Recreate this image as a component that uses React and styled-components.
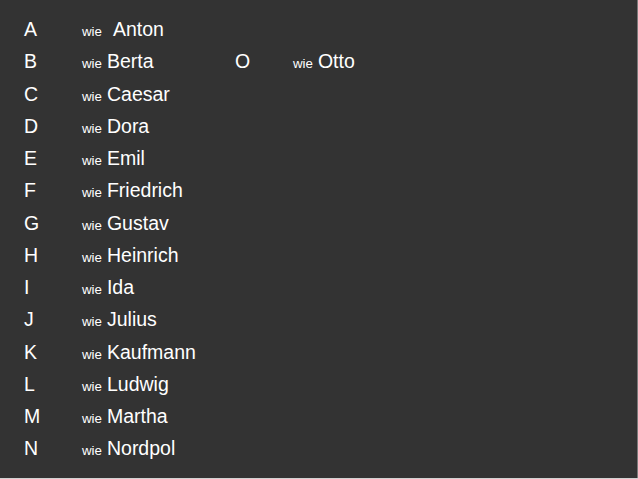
import React from "react";
import styled, { createGlobalStyle } from "styled-components";

const GlobalStyle = createGlobalStyle`
  html, body {
    margin: 0;
    padding: 0;
    background: #d2d2d2;
  }
`;

const Slide = styled.div`
  box-sizing: border-box;
  width: 638px;
  height: 478px;
  background: #333333;
  border-right: 1px solid #7a7a7a;
  padding: 13px 0 0 24px;
  display: grid;
  grid-template-columns: 211px 1fr;
  align-items: start;
  font-family: "Liberation Sans", Arial, sans-serif;
  color: #ffffff;
`;

const Column = styled.div`
  display: flex;
  flex-direction: column;
  padding-top: ${(p) => (p.$offset ? "32.27px" : "0")};
`;

const Row = styled.div`
  display: flex;
  align-items: baseline;
  height: 32.27px;
  line-height: 32.27px;
`;

const Letter = styled.span`
  width: 58px;
  font-size: 19.5px;
`;

const Wie = styled.span`
  font-size: 13.3px;
`;

const Name = styled.span`
  font-size: 19.5px;
  margin-left: ${(p) => p.$gap || 5}px;
`;

const left = [
  ["A", "Anton", 11],
  ["B", "Berta"],
  ["C", "Caesar"],
  ["D", "Dora"],
  ["E", "Emil"],
  ["F", "Friedrich"],
  ["G", "Gustav"],
  ["H", "Heinrich"],
  ["I", "Ida"],
  ["J", "Julius"],
  ["K", "Kaufmann"],
  ["L", "Ludwig"],
  ["M", "Martha"],
  ["N", "Nordpol"],
];

const right = [["O", "Otto"]];

const Entry = ({ letter, name, gap }) => (
  <Row>
    <Letter>{letter}</Letter>
    <Wie>wie</Wie>
    <Name $gap={gap}>{name}</Name>
  </Row>
);

export default function App() {
  return (
    <>
      <GlobalStyle />
      <Slide>
        <Column>
          {left.map(([l, n, g]) => (
            <Entry key={l} letter={l} name={n} gap={g} />
          ))}
        </Column>
        <Column $offset>
          {right.map(([l, n]) => (
            <Entry key={l} letter={l} name={n} />
          ))}
        </Column>
      </Slide>
    </>
  );
}
